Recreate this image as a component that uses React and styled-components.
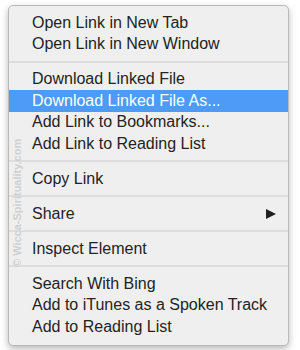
import React from "react";
import styled, { createGlobalStyle } from "styled-components";

const Global = createGlobalStyle`
  html, body {
    margin: 0;
    padding: 0;
    background: #ffffff;
    width: 300px;
    height: 350px;
    overflow: hidden;
  }
  * { box-sizing: border-box; }
`;

const groups = [
  ["Open Link in New Tab", "Open Link in New Window"],
  ["Download Linked File", "Download Linked File As...", "Add Link to Bookmarks...", "Add Link to Reading List"],
  ["Copy Link"],
  [{ label: "Share", submenu: true }],
  ["Inspect Element"],
  ["Search With Bing", "Add to iTunes as a Spoken Track", "Add to Reading List"],
];

const ACTIVE = "Download Linked File As...";

export default function App() {
  return (
    <>
      <Global />
      <Page>
        <Menu>
          {groups.map((group, gi) => (
            <React.Fragment key={gi}>
              {gi > 0 && <Separator />}
              {group.map((item) => {
                const label = typeof item === "string" ? item : item.label;
                const submenu = typeof item !== "string" && item.submenu;
                return (
                  <Item key={label} $active={label === ACTIVE}>
                    <span>{label}</span>
                    {submenu && <Arrow />}
                  </Item>
                );
              })}
            </React.Fragment>
          ))}
          <Watermark>© Wicca-Spirituality.com</Watermark>
        </Menu>
      </Page>
    </>
  );
}

const Page = styled.div`
  width: 300px;
  height: 350px;
  padding: 5px 11px 0 8px;
`;

const Menu = styled.div`
  position: relative;
  display: flex;
  flex-direction: column;
  width: 281px;
  padding: 6px 0 7px 0;
  background: #efefef;
  border: 1px solid #b9b9b9;
  border-radius: 5px;
  box-shadow: 0 3px 7px rgba(0, 0, 0, 0.28);
  font-family: "Liberation Sans", Arial, sans-serif;
  font-size: 16px;
  color: #232323;
`;

const Item = styled.div`
  display: flex;
  align-items: center;
  justify-content: space-between;
  height: 21.5px;
  padding: 0 12px 0 23px;
  white-space: nowrap;
  background: ${(p) => (p.$active ? "#4d9bf7" : "transparent")};
  color: ${(p) => (p.$active ? "#ffffff" : "#232323")};
`;

const Separator = styled.div`
  height: 13.5px;
  display: flex;
  align-items: center;
  &::after {
    content: "";
    flex: 1;
    height: 2px;
    background: #dddddd;
  }
`;

const Arrow = styled.span`
  width: 0;
  height: 0;
  border-top: 5.5px solid transparent;
  border-bottom: 5.5px solid transparent;
  border-left: 10px solid #1f1f1f;
`;

const Watermark = styled.div`
  position: absolute;
  left: 2px;
  top: 261px;
  transform: rotate(-90deg);
  transform-origin: 0 0;
  font-family: "Liberation Sans", Arial, sans-serif;
  font-size: 11px;
  font-weight: bold;
  color: #d0d0d0;
  white-space: nowrap;
`;
